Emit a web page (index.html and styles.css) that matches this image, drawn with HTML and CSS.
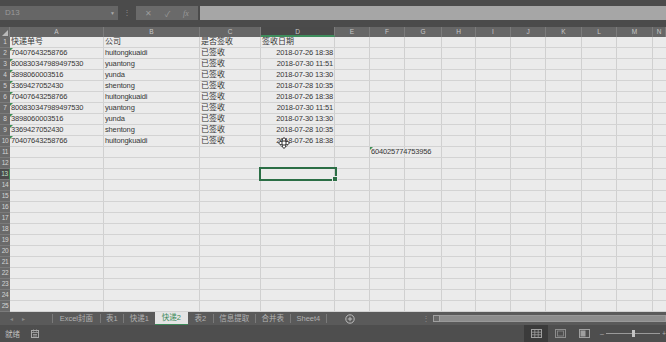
FILE: index.html
```html
<!DOCTYPE html>
<html lang="zh">
<head>
<meta charset="utf-8">
<title>Excel</title>
<link rel="stylesheet" href="styles.css">
</head>
<body>
<div class="topbar">
  <div class="namebox"><span>D13</span><span class="dd">▼</span></div>
  <div class="vdots">⋮</div>
  <div class="fbtns"><span>✕</span><span>✓</span><span class="fx">fx</span></div>
  <div class="finput"></div>
</div>
<div class="sheet">
  <div class="colhead">
    <div class="ch corner"></div>
    <div class="ch w-a">A</div><div class="ch w-b">B</div><div class="ch w-c">C</div><div class="ch w-d act">D</div>
    <div class="ch w-e">E</div><div class="ch w-f">F</div><div class="ch w-g">G</div><div class="ch w-h">H</div>
    <div class="ch w-i">I</div><div class="ch w-j">J</div><div class="ch w-k">K</div><div class="ch w-l">L</div>
    <div class="ch w-m">M</div><div class="ch w-n">N</div>
  </div>
  <div class="rows">
    <div class="row"><div class="rh">1</div><div class="cells"><div class="c w-a cjk">快递单号</div><div class="c w-b cjk">公司</div><div class="c w-c cjk">是否签收</div><div class="c w-d cjk">签收日期</div></div></div>
    <div class="row"><div class="rh">2</div><div class="cells"><div class="c w-a t">70407643258766</div><div class="c w-b">huitongkuaidi</div><div class="c w-c cjk">已签收</div><div class="c w-d r">2018-07-26 18:38</div></div></div>
    <div class="row"><div class="rh">3</div><div class="cells"><div class="c w-a t">800830347989497530</div><div class="c w-b">yuantong</div><div class="c w-c cjk">已签收</div><div class="c w-d r">2018-07-30 11:51</div></div></div>
    <div class="row"><div class="rh">4</div><div class="cells"><div class="c w-a t">3898060003516</div><div class="c w-b">yunda</div><div class="c w-c cjk">已签收</div><div class="c w-d r">2018-07-30 13:30</div></div></div>
    <div class="row"><div class="rh">5</div><div class="cells"><div class="c w-a t">3369427052430</div><div class="c w-b">shentong</div><div class="c w-c cjk">已签收</div><div class="c w-d r">2018-07-28 10:35</div></div></div>
    <div class="row"><div class="rh">6</div><div class="cells"><div class="c w-a t">70407643258766</div><div class="c w-b">huitongkuaidi</div><div class="c w-c cjk">已签收</div><div class="c w-d r">2018-07-26 18:38</div></div></div>
    <div class="row"><div class="rh">7</div><div class="cells"><div class="c w-a t">800830347989497530</div><div class="c w-b">yuantong</div><div class="c w-c cjk">已签收</div><div class="c w-d r">2018-07-30 11:51</div></div></div>
    <div class="row"><div class="rh">8</div><div class="cells"><div class="c w-a t">3898060003516</div><div class="c w-b">yunda</div><div class="c w-c cjk">已签收</div><div class="c w-d r">2018-07-30 13:30</div></div></div>
    <div class="row"><div class="rh">9</div><div class="cells"><div class="c w-a t">3369427052430</div><div class="c w-b">shentong</div><div class="c w-c cjk">已签收</div><div class="c w-d r">2018-07-28 10:35</div></div></div>
    <div class="row"><div class="rh">10</div><div class="cells"><div class="c w-a t">70407643258766</div><div class="c w-b">huitongkuaidi</div><div class="c w-c cjk">已签收</div><div class="c w-d r">2018-07-26 18:38</div></div></div>
    <div class="row"><div class="rh">11</div><div class="cells"><div class="c w-a"></div><div class="c w-b"></div><div class="c w-c"></div><div class="c w-d"></div><div class="c w-e"></div><div class="c w-f t">604025774753956</div></div></div>
    <div class="row"><div class="rh">12</div><div class="cells"></div></div>
    <div class="row"><div class="rh sel-rh">13</div><div class="cells"><div class="c w-a"></div><div class="c w-b"></div><div class="c w-c"></div><div class="c w-d sel"></div></div></div>
    <div class="row"><div class="rh">14</div><div class="cells"></div></div>
    <div class="row"><div class="rh">15</div><div class="cells"></div></div>
    <div class="row"><div class="rh">16</div><div class="cells"></div></div>
    <div class="row"><div class="rh">17</div><div class="cells"></div></div>
    <div class="row"><div class="rh">18</div><div class="cells"></div></div>
    <div class="row"><div class="rh">19</div><div class="cells"></div></div>
    <div class="row"><div class="rh">20</div><div class="cells"></div></div>
    <div class="row"><div class="rh">21</div><div class="cells"></div></div>
    <div class="row"><div class="rh">22</div><div class="cells"></div></div>
    <div class="row"><div class="rh">23</div><div class="cells"></div></div>
    <div class="row"><div class="rh">24</div><div class="cells"></div></div>
    <div class="row"><div class="rh">25</div><div class="cells"></div></div>
  </div>
  <svg class="cursor" width="12" height="12" viewBox="0 0 12 12">
    <path d="M6 0.5 L8.3 3 L7 3 L7 5 L9 5 L9 3.7 L11.5 6 L9 8.3 L9 7 L7 7 L7 9 L8.3 9 L6 11.5 L3.7 9 L5 9 L5 7 L3 7 L3 8.3 L0.5 6 L3 3.7 L3 5 L5 5 L5 3 L3.7 3 Z" fill="#fff" stroke="#111" stroke-width="0.9"/>
  </svg>
</div>
<div class="tabbar">
  <div class="nav"><span>◂</span><span>▸</span></div>
  <span class="sep"></span>
  <div class="tab tw1">Excel封面</div><span class="sep"></span>
  <div class="tab tw2">表1</div><span class="sep"></span>
  <div class="tab tw3">快递1</div>
  <div class="tab tw4 active">快递2</div>
  <div class="tab tw5">表2</div><span class="sep"></span>
  <div class="tab tw6">信息提取</div><span class="sep"></span>
  <div class="tab tw7">合并表</div><span class="sep"></span>
  <div class="tab tw8">Sheet4</div><span class="sep"></span>
  <div class="plus"><svg width="10" height="10" viewBox="0 0 10 10"><circle cx="5" cy="5" r="4.2" fill="none" stroke="#bdbdbd" stroke-width="1"/><path d="M5 2.8V7.2M2.8 5H7.2" stroke="#bdbdbd" stroke-width="1"/></svg></div>
  <div class="tvdots">⋮</div>
  <div class="hscroll"><span class="hbtn"></span><span class="htrack"></span></div>
</div>
<div class="status">
  <div class="ready">就绪</div>
  <svg class="macro" width="8" height="9" viewBox="0 0 8 9"><rect x="0.5" y="1.5" width="7" height="7" fill="none" stroke="#a8a8a8"/><path d="M0.5 3.5H7.5M2.5 0.5V2.5M5.5 0.5V2.5M2 5.5H6M2 7H6" stroke="#a8a8a8" stroke-width="0.8"/></svg>
  <div class="spacer"></div>
  <div class="view on"><svg width="11" height="9" viewBox="0 0 11 9"><rect x="0.5" y="0.5" width="10" height="8" fill="none" stroke="#a0a0a0"/><path d="M0.5 3.2H10.5M0.5 5.8H10.5M3.8 0.5V8.5M7.2 0.5V8.5" stroke="#a0a0a0" stroke-width="0.8"/></svg></div>
  <div class="view"><svg width="11" height="9" viewBox="0 0 11 9"><rect x="0.5" y="0.5" width="10" height="8" fill="none" stroke="#8e8e8e"/><rect x="2.5" y="2" width="6" height="5" fill="none" stroke="#8e8e8e" stroke-width="0.8"/></svg></div>
  <div class="view"><svg width="11" height="9" viewBox="0 0 11 9"><rect x="0.5" y="0.5" width="10" height="8" fill="none" stroke="#a0a0a0"/><rect x="1.5" y="1.5" width="5" height="6" fill="#a0a0a0"/></svg></div>
  <div class="zoom"><span class="zm">–</span><span class="ztrack"><span class="zthumb"></span></span><span class="zp">+</span></div>
</div>
</body>
</html>
```

FILE: styles.css
```css
* { box-sizing: border-box; margin: 0; padding: 0; }
html, body { width: 666px; height: 342px; overflow: hidden; }
body {
  background: #4d4d4d;
  font-family: "Liberation Sans", "Noto Sans CJK SC", sans-serif;
  position: relative;
}

/* formula bar */
.topbar { height: 27px; background: #4b4b4b; display: flex; align-items: flex-start; padding-top: 6px; }
.namebox {
  width: 118px; height: 14px; background: #666666; color: #9a9a9a;
  font-size: 8px; line-height: 14px; padding: 0 3px 0 5px;
  display: flex; justify-content: space-between;
}
.namebox .dd { font-size: 5px; color: #aaaaaa; }
.vdots { width: 18px; text-align: center; color: #8a8a8a; font-size: 8px; line-height: 14px; }
.fbtns {
  width: 62px; height: 14px; background: #6a6a6a; color: #9a9a9a;
  display: flex; align-items: center; justify-content: space-around; font-size: 8px; padding: 0 3px;
}
.fbtns .fx { font-family: "Liberation Serif", serif; font-style: italic; }
.finput { flex: 1; height: 14px; background: #a6a6a6; margin-left: 2px; }

/* sheet */
.sheet { height: 285px; position: relative; background: #ebebeb; }
.colhead { display: flex; height: 10px; background: #676767; }
.ch {
  height: 10px; border-right: 1px solid #7c7c7c; color: #c8c8c8;
  font-size: 6.5px; line-height: 10px; text-align: center;
}
.ch.corner { width: 10px; position: relative; }
.ch.corner::after {
  content: ""; position: absolute; right: 1px; bottom: 1px;
  border-bottom: 6px solid #b9b9b9; border-left: 6px solid transparent;
}
.ch.act { background: #4a4a4a; border-bottom: 2px solid #3e8d5c; line-height: 9px; }
.w-a { width: 94px; } .w-b { width: 96px; } .w-c { width: 61px; } .w-d { width: 74px; }
.w-e { width: 35px; } .w-f { width: 35px; } .w-g { width: 37px; } .w-h { width: 34px; }
.w-i { width: 35px; } .w-j { width: 35px; } .w-k { width: 36px; } .w-l { width: 35px; }
.w-m { width: 36px; } .w-n { width: 13px; }

.rows {
  height: 275px;
  background-color: #ebebeb;
  background-image:
    linear-gradient(#d0d0d0, #d0d0d0), linear-gradient(#d0d0d0, #d0d0d0),
    linear-gradient(#d0d0d0, #d0d0d0), linear-gradient(#d0d0d0, #d0d0d0),
    linear-gradient(#d0d0d0, #d0d0d0), linear-gradient(#d0d0d0, #d0d0d0),
    linear-gradient(#d0d0d0, #d0d0d0), linear-gradient(#d0d0d0, #d0d0d0),
    linear-gradient(#d0d0d0, #d0d0d0), linear-gradient(#d0d0d0, #d0d0d0),
    linear-gradient(#d0d0d0, #d0d0d0), linear-gradient(#d0d0d0, #d0d0d0),
    linear-gradient(#d0d0d0, #d0d0d0);
  background-size: 1px 100%;
  background-repeat: no-repeat;
  background-position: 103px 0, 199px 0, 260px 0, 334px 0, 369px 0, 404px 0, 441px 0,
    475px 0, 510px 0, 545px 0, 581px 0, 616px 0, 652px 0;
}
.row { display: flex; height: 11px; }
.rh {
  width: 10px; flex: none; background: #6a6a6a; color: #d4d4d4;
  border-bottom: 1px solid #7b7b7b; font-size: 6.5px; line-height: 10px;
  text-align: center; letter-spacing: -0.3px; white-space: nowrap;
}
.rh.sel-rh { background: #4b4b4b; color: #bfe2cb; border-right: 1px solid #3e8d5c; }
.cells { flex: 1; display: flex; border-bottom: 1px solid #d3d3d3; }
.c {
  flex: none; height: 10px; font-size: 7.5px; line-height: 10px; color: #363636;
  white-space: nowrap; padding-left: 1px; position: relative; letter-spacing: -0.15px;
}
.c.cjk { font-size: 8px; letter-spacing: 0; }
.c.r { text-align: right; padding-right: 2px; }
.c.t::before {
  content: ""; position: absolute; left: 0; top: 0;
  border-top: 3px solid #3f8f56; border-right: 3px solid transparent;
}
.c.sel { outline: 2px solid #2b6e45; outline-offset: 0px; height: 10px; }
.c.sel::after {
  content: ""; position: absolute; right: -3px; bottom: -3px; width: 4px; height: 4px;
  background: #2b6e45; border: 1px solid #ebebeb;
}
.cursor { position: absolute; left: 278px; top: 110px; }

/* sheet tabs */
.tabbar { height: 13px; background: #5a5a5a; display: flex; align-items: center; color: #b2b2b2; font-size: 7.5px; }
.nav { width: 52px; display: flex; gap: 9px; padding-left: 10px; color: #8a8a8a; font-size: 6px; }
.sep { width: 1px; height: 9px; background: #7a7a7a; flex: none; }
.tab { height: 13px; line-height: 13px; text-align: center; white-space: nowrap; flex: none; }
.tw1 { width: 47px; } .tw2 { width: 22px; } .tw3 { width: 31px; } .tw4 { width: 33px; }
.tw5 { width: 25px; } .tw6 { width: 41px; } .tw7 { width: 34px; } .tw8 { width: 35px; }
.tab.active { background: #e4e4e4; color: #3c8a59; border-bottom: 1px solid #3c8a59; line-height: 12px; }
.plus { margin-left: 18px; width: 10px; height: 10px; display: flex; }
.tvdots { margin-left: 66px; width: 10px; text-align: center; color: #8a8a8a; font-size: 8px; }
.hscroll { margin-left: 2px; width: 234px; height: 7px; display: flex; }
.hbtn { width: 7px; height: 7px; border: 1px solid #a0a0a0; background: #6a6a6a; }
.htrack { flex: 1; background: #8d8d8d; border: 1px solid #999999; border-left: none; }

/* status bar */
.status { height: 17px; background: #4e4e4e; display: flex; align-items: center; color: #bdbdbd; font-size: 7.5px; }
.ready { width: 31px; padding-left: 5px; }
.macro { display: block; }
.spacer { flex: 1; }
.view { width: 24px; height: 17px; display: flex; align-items: center; justify-content: center; }
.view.on { background: #3b3b3b; }
.zoom { width: 70px; display: flex; align-items: center; padding-left: 4px; color: #b0b0b0; font-size: 7px; }
.ztrack { flex: 1; height: 1px; background: #9a9a9a; position: relative; margin: 0 2px; }
.zthumb { position: absolute; left: 26px; top: -3px; width: 3px; height: 7px; background: #c4c4c4; }
.zp { width: 4px; overflow: hidden; }
```
